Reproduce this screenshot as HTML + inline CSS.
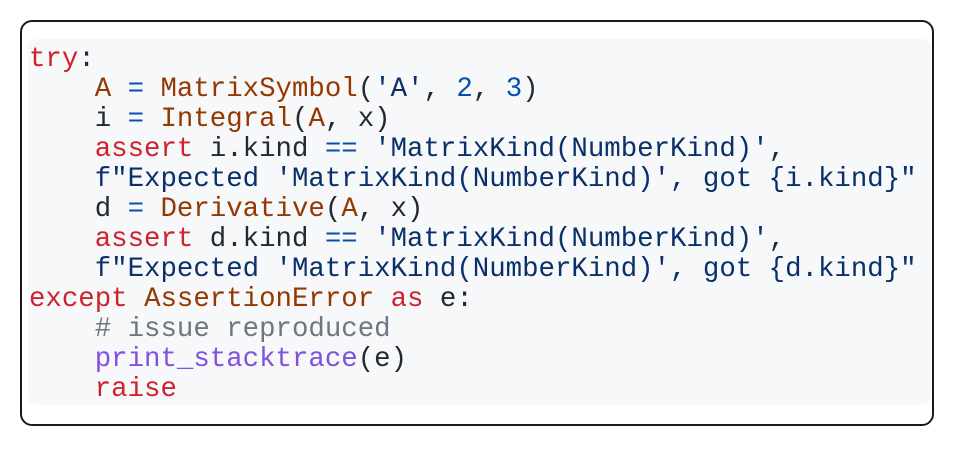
<!DOCTYPE html>
<html><head><meta charset="utf-8"><style>
html,body{margin:0;padding:0;background:#fff;width:957px;height:454px;overflow:hidden}
.outer{position:absolute;left:20px;top:20px;width:910px;height:402px;border:2px solid #1a1a1a;border-radius:12px;box-sizing:content-box}
.inner{position:absolute;left:6px;top:17px;width:903px;height:366px;background:#f6f8fa;border-radius:8px}
pre{margin:0;position:absolute;left:7px;top:23px;font-family:"Liberation Mono","DejaVu Sans Mono",monospace;font-size:27.4px;line-height:30px;color:#24292f}
.k{color:#cf222e}.f{color:#953800}.n{color:#0550ae}.s{color:#0a3069}.c{color:#6e7781}.p{color:#8250df}
</style></head><body>
<div class="outer"><div class="inner"></div>
<pre><span class="k">try</span>:
    <span class="f">A</span> <span class="n">=</span> <span class="f">MatrixSymbol</span>(<span class="s">'A'</span>, <span class="n">2</span>, <span class="n">3</span>)
    i <span class="n">=</span> <span class="f">Integral</span>(<span class="f">A</span>, x)
    <span class="k">assert</span> i.kind <span class="n">==</span> <span class="s">'MatrixKind(NumberKind)'</span>,
    <span class="s">f"Expected 'MatrixKind(NumberKind)', got {i.kind}"</span>
    d <span class="n">=</span> <span class="f">Derivative</span>(<span class="f">A</span>, x)
    <span class="k">assert</span> d.kind <span class="n">==</span> <span class="s">'MatrixKind(NumberKind)'</span>,
    <span class="s">f"Expected 'MatrixKind(NumberKind)', got {d.kind}"</span>
<span class="k">except</span> <span class="f">AssertionError</span> <span class="k">as</span> e:
    <span class="c"># issue reproduced</span>
    <span class="p">print_stacktrace</span>(e)
    <span class="k">raise</span></pre>
</div>
</body></html>
